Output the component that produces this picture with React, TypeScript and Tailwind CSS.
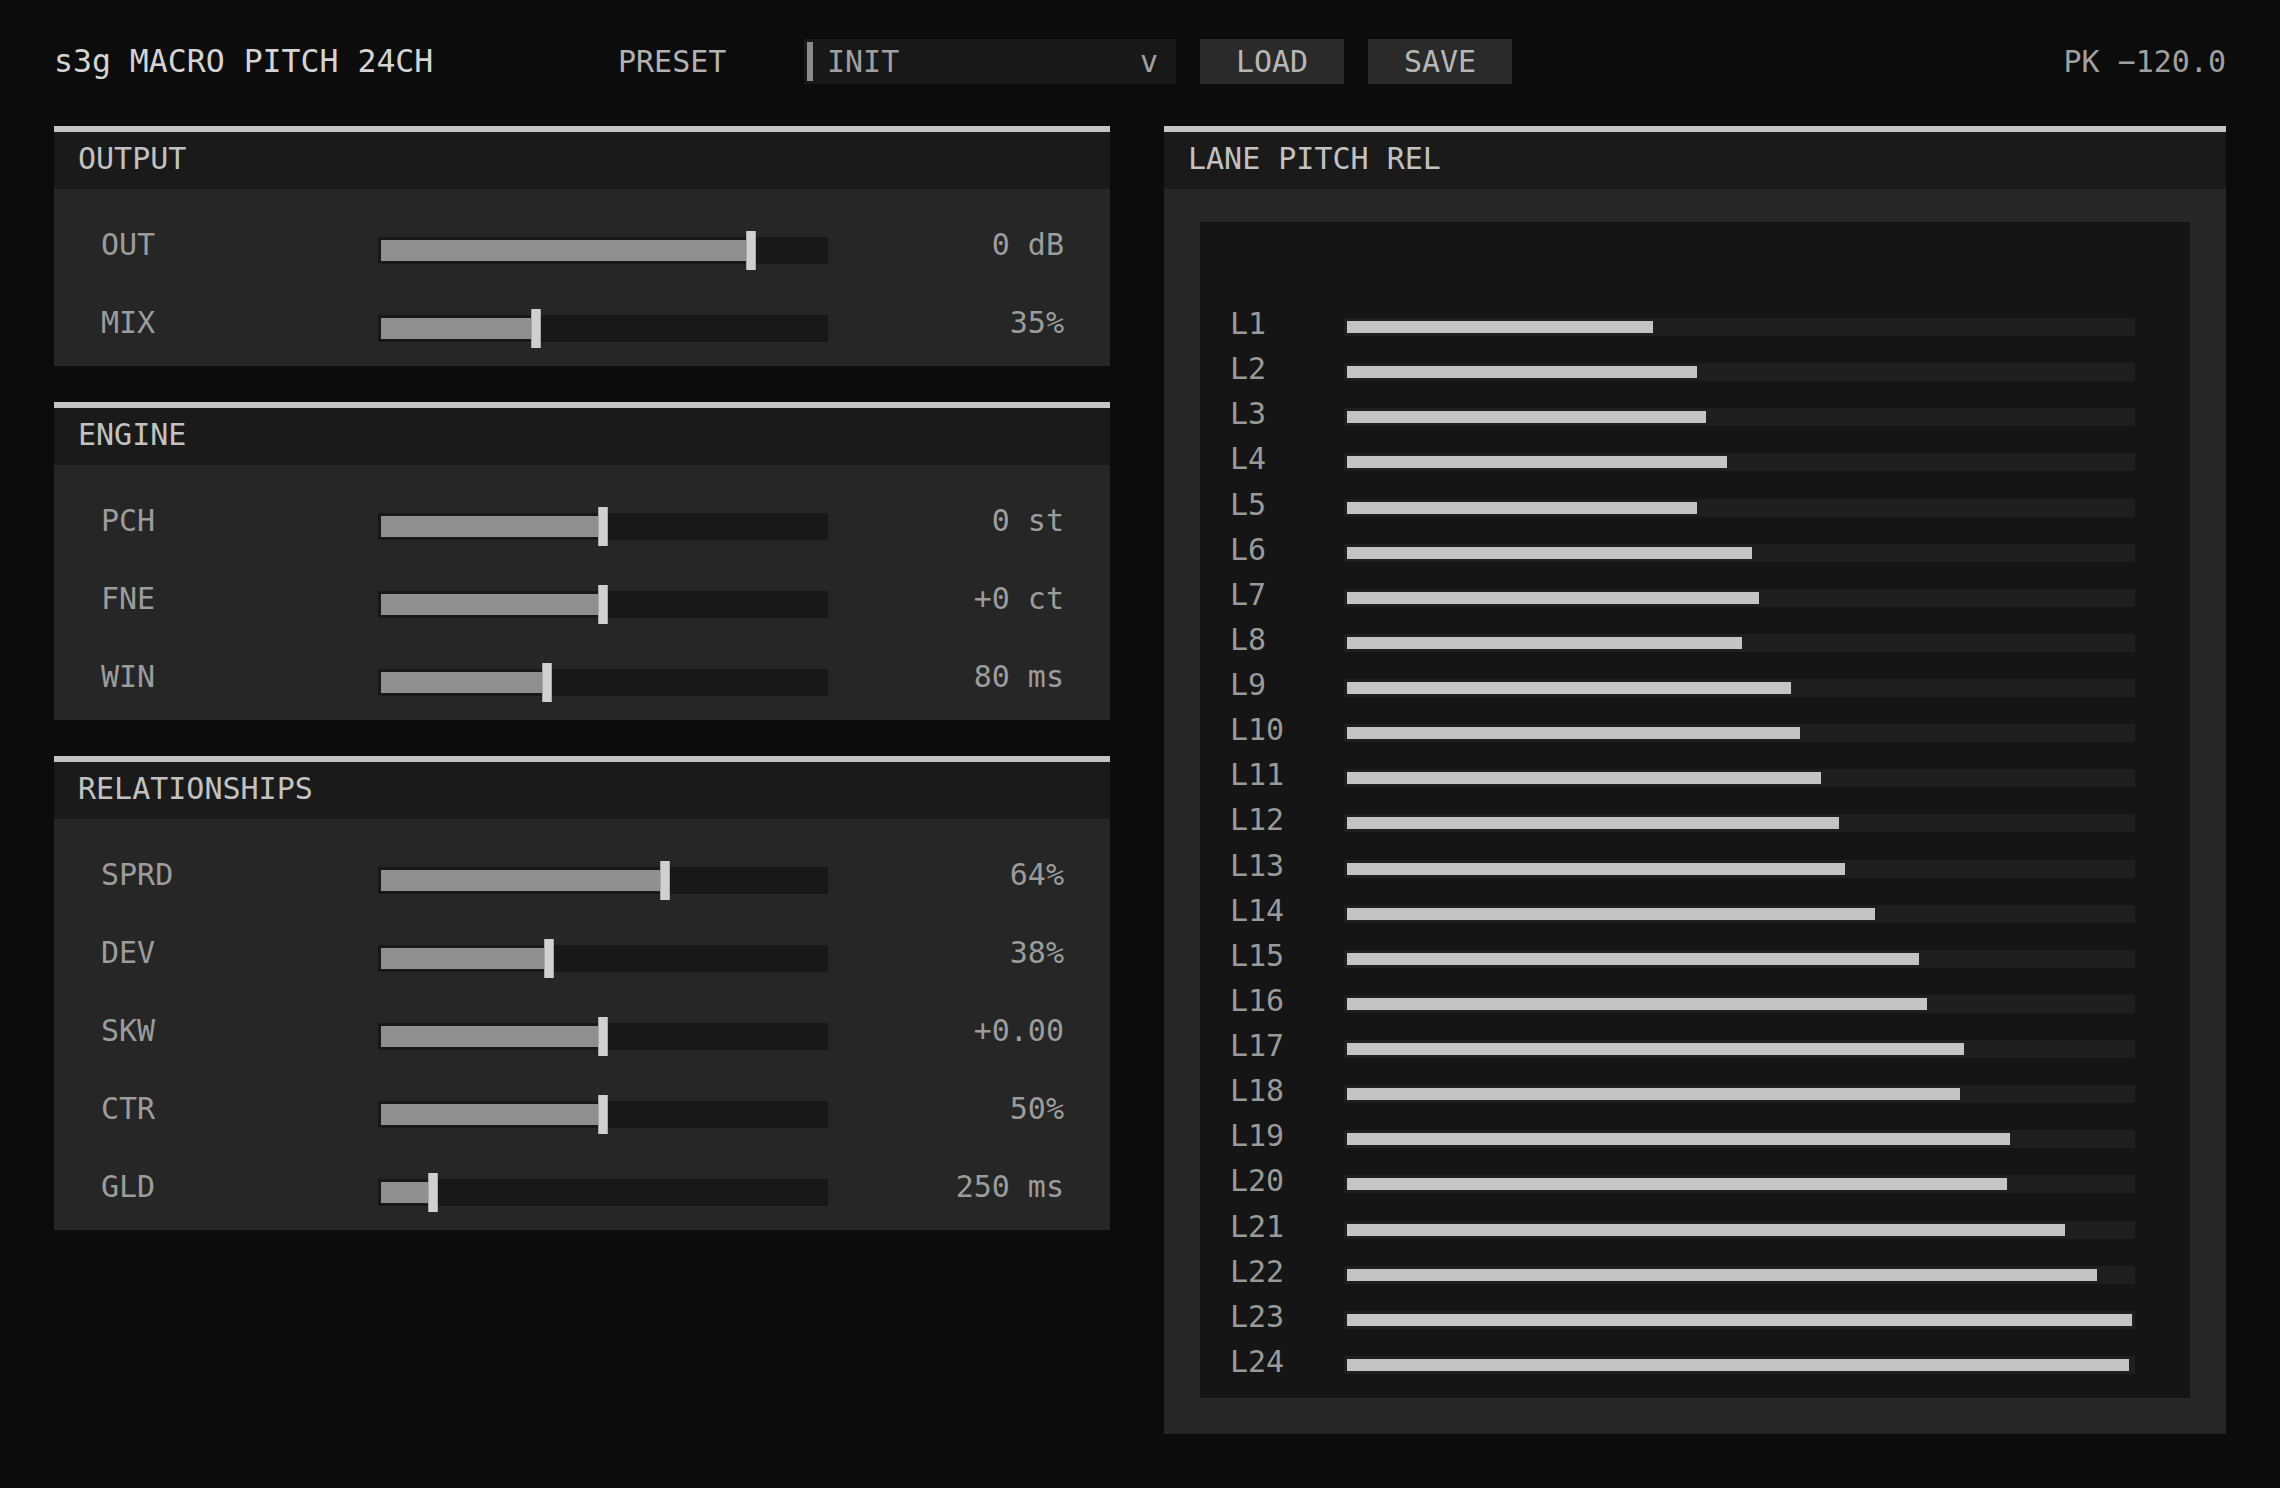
import React from "react";

type Param = { label: string; value: string; pct: number };

const output: Param[] = [
  { label: "OUT", value: "0 dB", pct: 0.833 },
  { label: "MIX", value: "35%", pct: 0.35 },
];

const engine: Param[] = [
  { label: "PCH", value: "0 st", pct: 0.5 },
  { label: "FNE", value: "+0 ct", pct: 0.5 },
  { label: "WIN", value: "80 ms", pct: 0.373 },
];

const relationships: Param[] = [
  { label: "SPRD", value: "64%", pct: 0.64 },
  { label: "DEV", value: "38%", pct: 0.378 },
  { label: "SKW", value: "+0.00", pct: 0.5 },
  { label: "CTR", value: "50%", pct: 0.5 },
  { label: "GLD", value: "250 ms", pct: 0.116 },
];

// relative pitch per lane, 0..1
const lanes = [
  0.39, 0.446, 0.457, 0.484, 0.446, 0.516, 0.525, 0.503, 0.566, 0.577, 0.604,
  0.627, 0.634, 0.673, 0.729, 0.739, 0.786, 0.781, 0.845, 0.841, 0.915, 0.955,
  1.0, 0.996,
];

function PanelHeader({ title }: { title: string }) {
  return (
    <div className="h-[57px] bg-[#1a1a1a] pl-[24px] pt-[9px] leading-[35px] text-[#c2c2c2]">
      {title}
    </div>
  );
}

function SliderRow({ param }: { param: Param }) {
  return (
    <div className="grid h-[39px] grid-cols-[277px_450px_1fr]">
      <div className="leading-[27px] text-[#9c9c9c]">{param.label}</div>
      <div className="relative h-[39px] pt-[6px]">
        <div className="h-[27px] bg-[#181818] p-[3px]">
          <div
            className="h-full bg-[#8f8f8f]"
            style={{ width: `${param.pct * 100}%` }}
          />
        </div>
        <div
          className="absolute top-0 h-[39px] w-[10px] border-x border-[#a8a8a8] bg-[#d0d0d0]"
          style={{ left: `${3 + param.pct * 444 - 5}px` }}
        />
      </div>
      <div className="text-right leading-[27px] text-[#9c9c9c]">
        {param.value}
      </div>
    </div>
  );
}

function SliderPanel({ title, params }: { title: string; params: Param[] }) {
  return (
    <section className="border-t-[6px] border-[#c4c4c4]">
      <PanelHeader title={title} />
      <div className="flex flex-col gap-[39px] bg-[#262626] pb-[18px] pl-[47px] pr-[46px] pt-[42px]">
        {params.map((p) => (
          <SliderRow key={p.label} param={p} />
        ))}
      </div>
    </section>
  );
}

function LanePanel() {
  return (
    <section className="border-t-[6px] border-[#c4c4c4]">
      <PanelHeader title="LANE PITCH REL" />
      <div className="bg-[#262626] px-[36px] pb-[36px] pt-[33px]">
        <div className="flex h-[1176px] flex-col bg-[#151515] pl-[30px] pt-[88px]">
          {lanes.map((v, i) => (
            <div key={i} className="flex h-[45.13px] shrink-0 items-start">
              <div className="w-[114px] leading-[27px] text-[#9a9a9a]">
                L{i + 1}
              </div>
              <div className="mt-[8px] h-[18px] w-[791px] bg-[#1f1f1f] p-[3px]">
                <div
                  className="h-full bg-[#c4c4c4]"
                  style={{ width: `${v * 100}%` }}
                />
              </div>
            </div>
          ))}
        </div>
      </div>
    </section>
  );
}

export default function App() {
  return (
    <div className="min-h-screen bg-[#0c0c0c] px-[54px] pt-[39px] font-['DejaVu_Sans_Mono',monospace] text-[30px]">
      <header className="flex h-[45px] items-center">
        <div className="w-[564px] text-[31.5px] text-[#d4d4d4]">
          s3g MACRO PITCH 24CH
        </div>
        <div className="w-[186px] text-[#b2b2b2]">PRESET</div>
        <div className="flex h-[45px] w-[372px] items-center bg-[#181818] pl-[3px] pr-[18px]">
          <div className="h-[39px] w-[6px] bg-[#8c8c8c]" />
          <span className="ml-[14px] flex-1 text-[#a0a0a0]">INIT</span>
          <span className="text-[#a0a0a0]">v</span>
        </div>
        <button className="ml-[24px] flex h-[45px] w-[144px] items-center justify-center bg-[#2a2a2a] text-[#b6b6b6]">
          LOAD
        </button>
        <button className="ml-[24px] flex h-[45px] w-[144px] items-center justify-center bg-[#2a2a2a] text-[#b6b6b6]">
          SAVE
        </button>
        <div className="ml-auto text-[#a0a0a0]">PK −120.0</div>
      </header>

      <main className="mt-[42px] grid grid-cols-[1056px_1062px] items-start gap-x-[54px]">
        <div className="flex flex-col gap-[36px]">
          <SliderPanel title="OUTPUT" params={output} />
          <SliderPanel title="ENGINE" params={engine} />
          <SliderPanel title="RELATIONSHIPS" params={relationships} />
        </div>
        <LanePanel />
      </main>
    </div>
  );
}
